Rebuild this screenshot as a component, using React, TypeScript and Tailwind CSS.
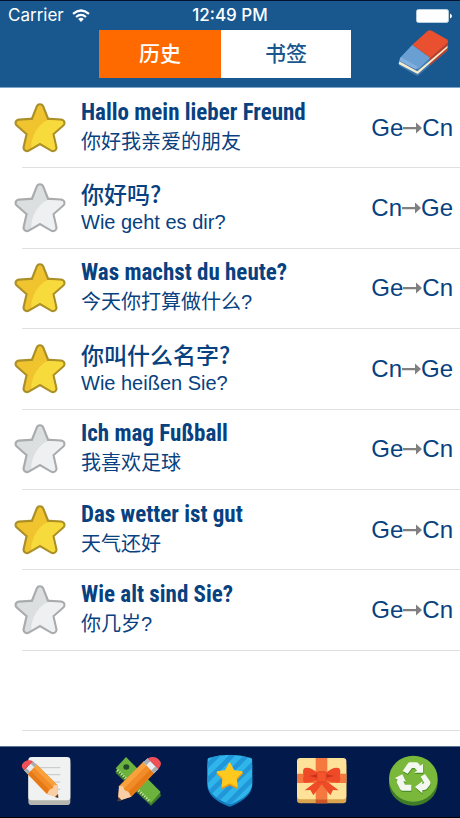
import { useId, useState } from "react";

interface Entry {
  id: number;
  title: string;
  subtitle: string;
  from: "Ge" | "Cn";
  to: "Ge" | "Cn";
  starred: boolean;
}

const initialEntries: Entry[] = [
  { id: 1, title: "Hallo mein lieber Freund", subtitle: "你好我亲爱的朋友", from: "Ge", to: "Cn", starred: true },
  { id: 2, title: "你好吗?", subtitle: "Wie geht es dir?", from: "Cn", to: "Ge", starred: false },
  { id: 3, title: "Was machst du heute?", subtitle: "今天你打算做什么?", from: "Ge", to: "Cn", starred: true },
  { id: 4, title: "你叫什么名字?", subtitle: "Wie heißen Sie?", from: "Cn", to: "Ge", starred: true },
  { id: 5, title: "Ich mag Fußball", subtitle: "我喜欢足球", from: "Ge", to: "Cn", starred: false },
  { id: 6, title: "Das wetter ist gut", subtitle: "天气还好", from: "Ge", to: "Cn", starred: true },
  { id: 7, title: "Wie alt sind Sie?", subtitle: "你几岁?", from: "Ge", to: "Cn", starred: false },
];

const STAR = "M119 57L136 100L182 103L148 133L158 177L119 154L80 177L90 133L56 103L102 100Z";

function StarIcon({ filled }: { filled: boolean }) {
  const clip = useId();
  const edge = filled ? "#ab8f28" : "#a9abac";
  const base = filled ? "#f0c42e" : "#dcdfe0";
  const light = filled ? "#f7da3c" : "#eff0f2";
  return (
    <svg viewBox="41 40 156 156" className="size-13" strokeLinejoin="round" aria-hidden="true">
      <clipPath id={clip}>
        <circle cx="185" cy="175" r="92" />
      </clipPath>
      <path d={STAR} fill={edge} stroke={edge} strokeWidth="27" />
      <path d={STAR} fill={base} stroke={base} strokeWidth="14" />
      <path d={STAR} fill={light} stroke={light} strokeWidth="14" clipPath={`url(#${clip})`} />
    </svg>
  );
}

function EraserIcon() {
  return (
    <svg viewBox="18 28 162 144" className="h-12 w-[54px]" aria-hidden="true">
      <path d="M30 114L84 143L174 62L172 90L86 164Q82 167 77 164L29 136Q25 133 26 128Z" fill="#3f76b0" />
      <path d="M119 112L175 62L172 90L117 137Z" fill="#b8402f" />
      <path d="M28 122L82 152L173 75L172 82L83 160L26 130Z" fill="#f3eccb" />
      <path d="M67 72L121 111L88 143Q82 147 76 144L30 121Q27 117 32 110Z" fill="#6a9fd4" />
      <path d="M32 109L28 120L77 146L83 138Z" fill="#82b0de" />
      <path d="M67 72L112 32Q118 27 125 30L170 56Q176 61 172 66L121 111Z" fill="#e8502f" />
    </svg>
  );
}

function WifiIcon() {
  return (
    <svg viewBox="0 0 18 13" className="h-[13px] w-[18px]" fill="none" stroke="#fff" strokeWidth="2.2" aria-hidden="true">
      <path d="M1 4.8Q9 -1.8 17 4.8" />
      <path d="M4 8Q9 3.8 14 8" />
      <path d="M9 13L6.2 9.9Q9 7.8 11.8 9.9Z" fill="#fff" stroke="none" />
    </svg>
  );
}

function BatteryIcon() {
  return (
    <svg viewBox="0 0 36 14" className="h-3.5 w-9" aria-hidden="true">
      <rect x="0.5" y="0.5" width="32" height="13" rx="2" fill="#fff" stroke="#b9cde0" />
      <path d="M34 4.5Q36 5.5 36 7Q36 8.5 34 9.5Z" fill="#fff" />
    </svg>
  );
}

function ArrowIcon() {
  return (
    <svg viewBox="0 0 19 12" className="h-3 w-[19px]" aria-hidden="true">
      <path d="M0 5H13V0.5L19 6L13 11.5V7.2H0Z" fill="#808080" />
    </svg>
  );
}

// Pencil pointing to the lower right, shared by the first two tabs
function Pencil() {
  return (
    <>
      <path d="M80 84L108 56L172 120L174 157L141 147Z" fill="#f28c28" />
      <path d="M80 84L89 75L154 140L141 147Z" fill="#e67a17" />
      <path d="M99 65L108 56L172 120L164 130Z" fill="#f9a13d" />
      <path d="M141 147L148 134L158 130L162 120L172 120L175 158Z" fill="#fbcfa5" />
      <path d="M165 156L174 147L175 159Z" fill="#4b3b35" />
      <path d="M72 76L99 49L110 59L83 87Z" fill="#e9ecee" />
      <path d="M72 76L79 69L90 80L83 87ZM92 56L99 49L110 59L103 67Z" fill="#a9adb0" />
      <path d="M72 76Q62 66 67 57Q76 44 89 46Q95 46 99 50Z" fill="#ef4f57" />
    </>
  );
}

function NotesIcon() {
  return (
    <svg viewBox="48 18 180 180" className="size-15" aria-hidden="true">
      <rect x="85" y="44" width="126" height="136" rx="10" fill="#b4b5ae" />
      <rect x="85" y="36" width="126" height="130" rx="10" fill="#f0f1f1" />
      <path d="M112 68H181M120 89H181M130 111H181M150 133H181" stroke="#c4c6c8" strokeWidth="3" />
      <Pencil />
    </svg>
  );
}

function ToolsIcon() {
  return (
    <svg viewBox="324 18 180 180" className="size-15" aria-hidden="true">
      <path d="M347 78L378 44L482 147V154L453 182L347 84Z" fill="#3f7d2c" />
      <path d="M347 70L378 36L482 141L453 174Z" fill="#6cb33e" />
      <ellipse cx="379" cy="66" rx="9" ry="8" fill="#234a2a" />
      <path d="M352 76L450 170" stroke="#d9efc0" strokeWidth="8" strokeDasharray="3 5" />
      <g transform="translate(560 -18) scale(-1.18 1.18)">
        <Pencil />
      </g>
    </svg>
  );
}

function ShieldIcon() {
  const clip = useId();
  return (
    <svg viewBox="60 18 180 180" className="size-15" aria-hidden="true">
      <clipPath id={clip}>
        <path d="M82 44Q82 39 88 38Q150 20 210 38Q217 39 217 45V112Q217 152 154 177Q149 179 145 177Q82 152 82 112Z" />
      </clipPath>
      <path d="M82 60H217V120Q215 157 156 183Q149 187 142 183Q82 158 82 120Z" fill="#1478b8" />
      <g clipPath={`url(#${clip})`}>
        <path d="M70 20H230V190H70Z" fill="#2fb5ea" />
        <path d="M60 84L140 4M60 128L170 18M60 172L214 18M84 192L240 36M128 192L250 70" stroke="#2196d8" strokeWidth="14" />
      </g>
      <path d="M149 58L161 80L187 85L169 104L172 130L149 119L126 130L129 104L111 85L137 80Z" fill="#e39a18" stroke="#e39a18" strokeWidth="4" strokeLinejoin="round" />
      <path d="M149 54L161 77L186 81L168 99L171 124L149 113L127 124L130 99L112 81L137 77Z" fill="#ffc91f" stroke="#ffc91f" strokeWidth="4" strokeLinejoin="round" />
    </svg>
  );
}

function GiftIcon() {
  return (
    <svg viewBox="336 18 180 180" className="size-15" aria-hidden="true">
      <rect x="351" y="50" width="148" height="125" rx="10" fill="#d9a44e" />
      <rect x="351" y="39" width="148" height="124" rx="10" fill="#ffe29a" />
      <path d="M407 39H442V163H407ZM351 86H499V114H351Z" fill="#f5793f" />
      <path d="M407 163H442V175H407Z" fill="#cf5426" />
      <path d="M408 110L374 136L391 135L400 151L425 118L451 151L459 135L476 136L442 110Z" fill="#ee4b27" />
      <path d="M411 82Q390 64 374 69Q366 74 371 92Q366 108 374 113Q392 114 411 106Z" fill="#ee4a28" />
      <path d="M439 82Q460 64 476 69Q484 74 479 92Q484 108 476 113Q458 114 439 106Z" fill="#ee4a28" />
      <path d="M411 88L388 93L411 98ZM439 88L462 93L439 98Z" fill="#c92f1d" />
      <rect x="411" y="80" width="28" height="31" rx="6" fill="#f4542c" stroke="#d23a20" strokeWidth="2" />
    </svg>
  );
}

function RecycleIcon() {
  const arrows = (
    <>
      <path d="M188 78L203 56Q206 52 211 52H229Q234 52 237 57L240 62L249 57V83H222L231 77L224 69H216L203 86Z" />
      <path d="M255 87L270 109Q273 114 270 119L260 132Q257 135 251 135H247V145L225 126L247 109V118L253 114L242 95Z" />
      <path d="M214 119V137H188Q183 137 180 132L171 114Q169 110 173 104L165 99L187 88L198 111L190 108L195 119Z" />
    </>
  );
  return (
    <svg viewBox="132 18 180 180" className="size-15" aria-hidden="true">
      <ellipse cx="220" cy="114" rx="73" ry="68" fill="#3f7c28" />
      <ellipse cx="220" cy="101" rx="73" ry="69" fill="#79b83a" />
      <g fill="#4f8f2c" transform="translate(1 4)">{arrows}</g>
      <g fill="#f4f7f0">{arrows}</g>
    </svg>
  );
}

const navItems = [
  { label: "Notes", Icon: NotesIcon },
  { label: "Tools", Icon: ToolsIcon },
  { label: "Favorites", Icon: ShieldIcon },
  { label: "Gifts", Icon: GiftIcon },
  { label: "Recycle", Icon: RecycleIcon },
];

export default function App() {
  const [entries, setEntries] = useState<Entry[]>(initialEntries);
  const [tab, setTab] = useState<"history" | "bookmarks">("history");

  const toggleStar = (id: number) =>
    setEntries(entries.map((e) => (e.id === id ? { ...e, starred: !e.starred } : e)));

  const visible = tab === "history" ? entries : entries.filter((e) => e.starred);

  return (
    <div className="flex min-h-screen flex-col bg-white font-['Liberation_Sans','Noto_Sans_CJK_SC',sans-serif] text-[#07417f]">
      <header className="border-t border-b border-t-[#04132f] border-b-[#7fa6c8] bg-[#18588f] pb-[9px]">
        {/* Status bar */}
        <div className="grid h-[29px] grid-cols-3 items-center px-2 font-['Inter',sans-serif] text-[17px] text-white">
          <div className="flex items-center gap-2">
            <span>Carrier</span>
            <WifiIcon />
          </div>
          <span className="text-center font-medium">12:49 PM</span>
          <div className="flex justify-end">
            <BatteryIcon />
          </div>
        </div>

        {/* Segmented control and erase button */}
        <div className="grid grid-cols-[99px_1fr_109px] items-center">
          <div className="col-start-2 flex h-12 text-[21px] font-medium">
            <button
              onClick={() => setTab("history")}
              className={`w-[122px] ${tab === "history" ? "bg-[#ff6a00] text-white" : "bg-white text-[#18588f]"}`}
            >
              历史
            </button>
            <button
              onClick={() => setTab("bookmarks")}
              className={`flex-1 ${tab === "bookmarks" ? "bg-[#ff6a00] text-white" : "bg-white text-[#18588f]"}`}
            >
              书签
            </button>
          </div>
          <button className="flex justify-end pr-2.5" aria-label="Clear history" onClick={() => setEntries([])}>
            <EraserIcon />
          </button>
        </div>
      </header>

      {/* Phrase list */}
      <main className="flex flex-1 flex-col pb-[15px]">
        <ul className="grid flex-1 grid-rows-8">
          {visible.map((e) => (
            <li key={e.id} className="ml-[22px] flex items-center border-b border-[#dfe0e2] pr-[7px]">
              <button className="-ml-2" aria-label={e.starred ? "Remove bookmark" : "Add bookmark"} onClick={() => toggleStar(e.id)}>
                <StarIcon filled={e.starred} />
              </button>
              <div className="min-w-0 flex-1 pl-[15px]">
                <p
                  className={`text-[23px] leading-7 ${
                    e.from === "Ge"
                      ? "font-['Roboto_Condensed','Liberation_Sans',sans-serif] font-bold"
                      : "font-['Noto_Sans_CJK_SC',sans-serif] font-medium"
                  }`}
                >
                  {e.title}
                </p>
                <p className="text-xl leading-[30px]">{e.subtitle}</p>
              </div>
              <div className="flex items-center text-2xl">
                <span>{e.from}</span>
                <ArrowIcon />
                <span>{e.to}</span>
              </div>
            </li>
          ))}
          <li className="row-start-8 ml-[22px] border-b border-[#dfe0e2]" aria-hidden="true" />
        </ul>
      </main>

      <nav className="grid grid-cols-5 border-t border-b border-t-[#5f7396] border-b-black bg-[#011a4b] pt-1 pb-1.5">
        {navItems.map(({ label, Icon }) => (
          <button key={label} aria-label={label} className="flex justify-center">
            <Icon />
          </button>
        ))}
      </nav>
    </div>
  );
}
